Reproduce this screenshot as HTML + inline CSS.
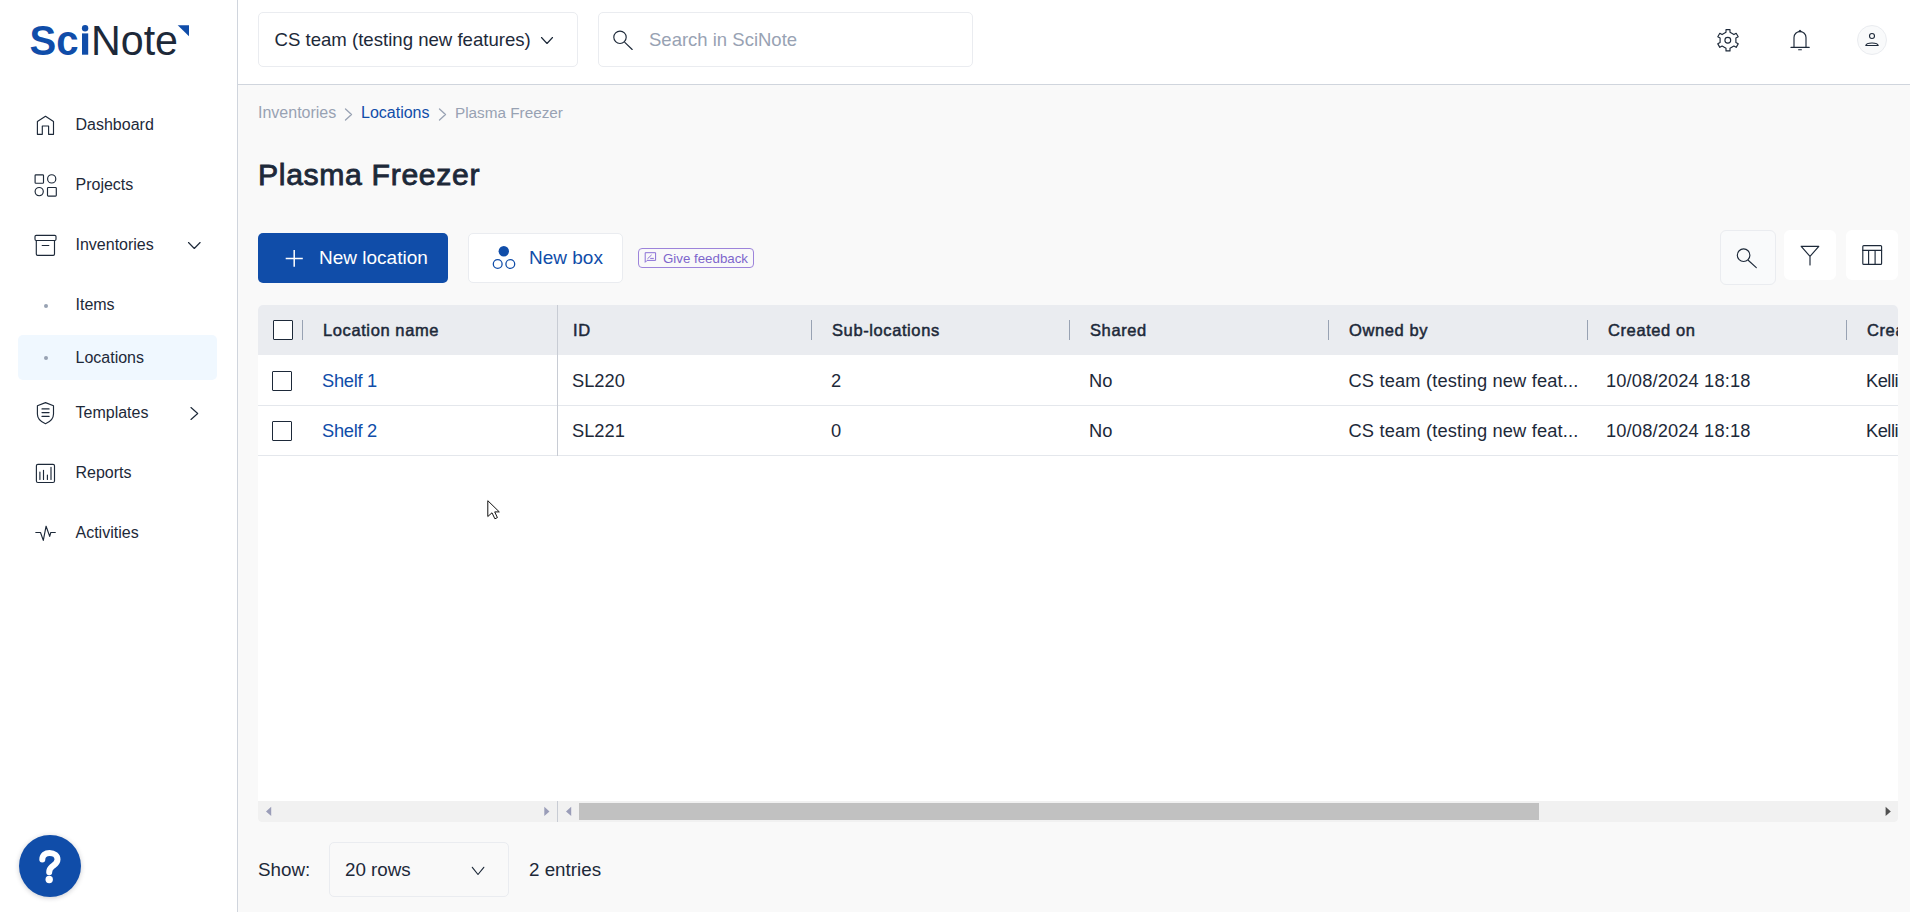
<!DOCTYPE html>
<html><head><meta charset="utf-8">
<style>
*{box-sizing:border-box;margin:0;padding:0}
html,body{width:1910px;height:912px;overflow:hidden;background:#F9F9F9;font-family:"Liberation Sans",sans-serif;color:#1D2939}
.a{position:absolute}
.t{position:absolute;white-space:nowrap;line-height:1}
svg{position:absolute;overflow:visible}
#side{position:absolute;left:0;top:0;width:238px;height:912px;background:#fff;border-right:1px solid #D0D5DD}
#head{position:absolute;left:238px;top:0;width:1672px;height:85px;background:#fff;border-bottom:1px solid #D0D5DD}
.nav{font-size:16px;color:#1D2939}
.bc{font-size:16px;color:#98A2B3}
.th{font-size:16.5px;font-weight:400;color:#1D2939;-webkit-text-stroke:0.5px #1D2939;letter-spacing:0.6px}
.td{font-size:18.3px;color:#1D2939}
.lnk{color:#104DA9}
.sep{position:absolute;top:320px;width:1px;height:20px;background:#98A2B3}
.cb{position:absolute;width:20px;height:20px;border:1.5px solid #1D2939;border-radius:1px;background:#fff}
.ft{font-size:18.8px}
</style></head><body>
<div id="side"></div>
<div id="head"></div>

<!-- logo -->
<svg style="left:0;top:0" width="238" height="84">
  <text x="29.5" y="54.8" font-family="Liberation Sans" font-weight="700" font-size="42.5" fill="#104DA9" textLength="49" lengthAdjust="spacingAndGlyphs">Sc</text>
  <rect x="82" y="33.4" width="6.2" height="21.3" fill="#104DA9"/>
  <circle cx="85.1" cy="28.2" r="3.2" fill="#104DA9"/>
  <text x="91" y="54.8" font-family="Liberation Sans" font-weight="400" font-size="42.7" fill="#1D2939" textLength="87" lengthAdjust="spacingAndGlyphs">Note</text>
  <path d="M177.7 25.2 H189 V36.2 Z" fill="#104DA9"/>
</svg>

<!-- sidebar icons -->
<svg style="left:0;top:0" width="238" height="600" fill="none" stroke="#1D2939" stroke-width="1.15" stroke-linejoin="round" stroke-linecap="round">
  <path d="M37.4,134.3 V121.5 L45.5,116.3 L53.5,121.5 V134.3 H48.6 V126 H42.3 V134.3 Z"/>
  <rect x="35.1" y="174.8" width="8.4" height="8.4" rx="0.8"/>
  <circle cx="51.7" cy="178.9" r="4.1"/>
  <circle cx="39.2" cy="191.6" r="4.1"/>
  <rect x="47.5" y="187.5" width="8.8" height="8.6" rx="0.8"/>
  <rect x="35" y="235.4" width="21" height="5.1" rx="1.2"/>
  <path d="M36.3,240.5 V254 Q36.3,255.3 37.6,255.3 H53.2 Q54.5,255.3 54.5,254 V240.5"/>
  <path d="M42.2,245.5 H48.8"/>
  <path d="M45.5,402.6 L53.5,405.7 V414 Q53.5,420.5 45.5,423.7 Q37.4,420.5 37.4,414 V405.7 Z"/>
  <path d="M42,408.9 H49.1 M42,412.6 H49.1 M42,416.4 H49.1"/>
  <rect x="36.4" y="464.3" width="18.1" height="18.2" rx="1.5"/>
  <path d="M39.9,472.1 V479.5 M43.5,470.2 V479.5 M47.4,475.1 V479.5 M51,467.2 V479.5"/>
  <path d="M35.8,532.5 H40.5 L43.3,540.4 L46.1,526.2 L49.7,536.4 L50.8,532.5 H55.3"/>
  <path d="M188.5,242.5 L194.3,248.5 L200.1,242.5"/>
  <path d="M191,407.5 L197.7,413.5 L191,419.5"/>
</svg>
<div class="a" style="left:18px;top:335px;width:199px;height:45px;background:#F0F8FF;border-radius:5px"></div>
<div class="a" style="left:43.6px;top:303.6px;width:4px;height:4px;border-radius:2px;background:#98A2B3"></div>
<div class="a" style="left:43.6px;top:356.2px;width:4px;height:4px;border-radius:2px;background:#98A2B3"></div>

<!-- sidebar nav -->
<div class="t nav" style="left:75.5px;top:117px">Dashboard</div>
<div class="t nav" style="left:75.5px;top:177px">Projects</div>
<div class="t nav" style="left:75.5px;top:237px">Inventories</div>
<div class="t nav" style="left:75.5px;top:297px">Items</div>
<div class="t nav" style="left:75.5px;top:350px">Locations</div>
<div class="t nav" style="left:75.5px;top:405px">Templates</div>
<div class="t nav" style="left:75.5px;top:465px">Reports</div>
<div class="t nav" style="left:75.5px;top:525px">Activities</div>

<!-- help button -->
<div class="a" style="left:18.5px;top:835px;width:62px;height:62px;border-radius:50%;background:#104DA9;box-shadow:0 1px 5px rgba(16,24,40,0.22)"></div>
<svg style="left:0;top:0" width="10" height="10" fill="none" stroke="#fff" stroke-width="6" stroke-linecap="round">
  <path d="M42.3,859.6 C42.3,855.2 45.4,853 49.6,853 C54.3,853 57.5,855.8 57.5,859.4 C57.5,863.2 54.2,864.8 51.9,866.8 C50,868.4 49.2,869.6 49.2,872.2"/>
  <circle cx="49.2" cy="879.5" r="3.7" fill="#fff" stroke="none"/>
</svg>

<!-- header -->
<div class="a" style="left:258px;top:12px;width:320px;height:55px;border:1px solid #EAECF0;border-radius:5px;background:#fff"></div>
<div class="t" style="left:274.5px;top:31px;font-size:18.6px">CS team (testing new features)</div>
<svg style="left:0;top:0" width="10" height="10" fill="none" stroke="#1D2939" stroke-width="1.15" stroke-linecap="round" stroke-linejoin="round">
  <path d="M541.5,37.5 L547,43.5 L552.5,37.5"/>
</svg>
<div class="a" style="left:598px;top:12px;width:375px;height:55px;border:1px solid #EAECF0;border-radius:5px;background:#fff"></div>
<svg style="left:0;top:0" width="10" height="10" fill="none" stroke="#1D2939" stroke-width="1.15" stroke-linecap="round">
  <circle cx="620" cy="37.3" r="6.2"/>
  <path d="M624.8,42.3 L632.2,49.5"/>
</svg>
<div class="t" style="left:649px;top:31.2px;font-size:18.5px;color:#98A2B3">Search in SciNote</div>

<svg style="left:0;top:0" width="10" height="10" fill="none" stroke="#1D2939" stroke-width="1.15" stroke-linejoin="round" stroke-linecap="round">
  <path d="M1726.00,32.35 L1726.00,29.69 L1730.00,29.69 L1730.00,32.35 L1733.89,34.59 L1736.19,33.26 L1738.19,36.73 L1735.89,38.06 L1735.89,42.54 L1738.19,43.87 L1736.19,47.34 L1733.89,46.01 L1730.00,48.25 L1730.00,50.91 L1726.00,50.91 L1726.00,48.25 L1722.11,46.01 L1719.81,47.34 L1717.81,43.87 L1720.11,42.54 L1720.11,38.06 L1717.81,36.73 L1719.81,33.26 L1722.11,34.59 Z"/>
  <circle cx="1727.8" cy="40.3" r="2.9"/>
  <path d="M1794,47.4 V37.5 A6,6 0 0 1 1806,37.5 V47.4 M1791,47.4 H1809.2 M1798.6,49.7 H1801.4"/>
  <path d="M1798.8,31.6 L1800,30.4 L1801.2,31.6 Z" fill="#1D2939"/>
</svg>
<div class="a" style="left:1857px;top:25px;width:30px;height:30px;border-radius:50%;border:1px solid #EAECF0;background:#F9FAFB"></div>
<svg style="left:0;top:0" width="10" height="10" fill="none" stroke="#1D2939" stroke-width="1.1" stroke-linejoin="round">
  <circle cx="1872" cy="36" r="2.5"/>
  <path d="M1865.8,45.5 C1866.3,42.2 1877.7,42.2 1878.2,45.5 Z"/>
</svg>

<!-- breadcrumb + title -->
<div class="t bc" style="left:258px;top:104.5px">Inventories</div>
<div class="t bc lnk" style="left:361px;top:104.5px;color:#104DA9">Locations</div>
<div class="t bc" style="left:455px;top:104.7px;font-size:15.3px">Plasma Freezer</div>
<svg style="left:0;top:0" width="10" height="10" fill="none" stroke="#98A2B3" stroke-width="1.3" stroke-linecap="round" stroke-linejoin="round">
  <path d="M345.5,109 L351.5,114.5 L345.5,120 M439.5,109 L445.5,114.5 L439.5,120"/>
</svg>
<div class="t" style="left:258px;top:160.3px;font-size:30.2px;font-weight:400;-webkit-text-stroke:0.85px #1D2939;letter-spacing:0.65px">Plasma Freezer</div>

<!-- buttons -->
<div class="a" style="left:258px;top:233px;width:190px;height:50px;background:#104DA9;border-radius:5px"></div>
<svg style="left:0;top:0" width="10" height="10" fill="none" stroke="#fff" stroke-width="1.5">
  <path d="M285.7,258.4 H302.8 M294.2,250 V266.8"/>
</svg>
<div class="t" style="left:319px;top:248px;font-size:19px;color:#fff">New location</div>

<div class="a" style="left:468px;top:233px;width:155px;height:50px;background:#fff;border:1px solid #EAECF0;border-radius:5px"></div>
<svg style="left:0;top:0" width="10" height="10" fill="none" stroke="#104DA9" stroke-width="1.3">
  <circle cx="503.8" cy="251.2" r="5.2" fill="#104DA9" stroke="none"/>
  <circle cx="497.7" cy="264" r="4.4"/>
  <circle cx="510.3" cy="264" r="4.4"/>
</svg>
<div class="t" style="left:529px;top:247.5px;font-size:19px;color:#104DA9">New box</div>

<div class="a" style="left:638px;top:248px;width:116px;height:20px;border:1px solid #9D84DB;border-radius:4px"></div>
<svg style="left:0;top:0" width="10" height="10" fill="none" stroke="#8A70D6" stroke-width="1" stroke-linejoin="round">
  <path d="M645.2,262.3 V252.7 H655.6 V260.4 H647.1 Z"/>
  <path d="M647.4,258.9 L651.6,254.9 M650.2,258.4 H653.8"/>
</svg>
<div class="t" style="left:663px;top:251.5px;font-size:13.3px;color:#7E66CC">Give feedback</div>

<div class="a" style="left:1720px;top:230px;width:56px;height:55px;background:#F9FAFB;border:1px solid #EAECF0;border-radius:6px"></div>
<div class="a" style="left:1784px;top:230px;width:52px;height:50px;background:#fff;border-radius:6px"></div>
<div class="a" style="left:1846px;top:230px;width:52px;height:50px;background:#fff;border-radius:6px"></div>
<svg style="left:0;top:0" width="10" height="10" fill="none" stroke="#1D2939" stroke-width="1.15" stroke-linecap="round" stroke-linejoin="round">
  <circle cx="1743.6" cy="255.2" r="6.3"/>
  <path d="M1748.2,260.3 L1756.3,267.6"/>
  <path d="M1801.2,246.3 H1818.8 L1810,256.4 Z M1810,256.4 V264.9"/>
  <rect x="1862.8" y="245.6" width="18.8" height="18.8" rx="1"/>
  <path d="M1862.8,250.4 H1881.6 M1868.6,250.4 V264.4 M1875.1,250.4 V264.4"/>
</svg>

<!-- table -->
<div class="a" style="left:258px;top:305px;width:1640px;height:517px;background:#fff;border-radius:5px 5px 4px 4px;overflow:hidden">
  <div class="a" style="left:0;top:0;width:1640px;height:50px;background:#EAECF0"></div>
  <div class="a" style="left:0;top:100px;width:1640px;height:1px;background:#E4E7EC"></div>
  <div class="a" style="left:0;top:150px;width:1640px;height:1px;background:#E4E7EC"></div>
  <div class="a" style="left:299px;top:0;width:1px;height:151px;background:#C8CCD4"></div>
  <div class="a" style="left:0;top:496px;width:1640px;height:21px;background:#F1F1F1"></div>
  <div class="a" style="left:299px;top:496px;width:1px;height:21px;background:#C8CCD4"></div>
  <div class="a" style="left:321px;top:498px;width:960px;height:17px;background:#C1C1C1"></div>
</div>
<svg style="left:0;top:0" width="10" height="10">
  <path d="M266,811.4 L271.2,806.8 V816 Z M549.5,811.4 L544.3,806.8 V816 Z M566,811.4 L571.2,806.8 V816 Z" fill="#9A9DB8"/>
  <path d="M1890.8,811.4 L1885.6,806.8 V816 Z" fill="#505050"/>
</svg>
<div class="sep" style="left:302px"></div>
<div class="sep" style="left:811px"></div>
<div class="sep" style="left:1069px"></div>
<div class="sep" style="left:1328px"></div>
<div class="sep" style="left:1587px"></div>
<div class="sep" style="left:1846px"></div>
<div class="cb" style="left:273px;top:320px"></div>
<div class="cb" style="left:272px;top:371px"></div>
<div class="cb" style="left:272px;top:421px"></div>

<div class="t th" style="left:323px;top:322px">Location name</div>
<div class="t th" style="left:573px;top:322px">ID</div>
<div class="t th" style="left:832px;top:322px">Sub-locations</div>
<div class="t th" style="left:1090px;top:322px">Shared</div>
<div class="t th" style="left:1349px;top:322px">Owned by</div>
<div class="t th" style="left:1608px;top:322px">Created on</div>
<div class="a" style="left:1866px;top:305px;width:32px;height:150px;overflow:hidden">
  <div class="t th" style="left:1px;top:17px">Created by</div>
  <div class="t td" style="left:0px;top:67.4px;letter-spacing:-0.5px">Kellie</div>
  <div class="t td" style="left:0px;top:117.4px;letter-spacing:-0.5px">Kellie</div>
</div>

<div class="t td lnk" style="left:322px;top:372.4px;letter-spacing:-0.3px">Shelf 1</div>
<div class="t td" style="left:572px;top:372.4px">SL220</div>
<div class="t td" style="left:831px;top:372.4px">2</div>
<div class="t td" style="left:1089px;top:372.4px">No</div>
<div class="t td" style="left:1348.5px;top:372.4px;letter-spacing:0.16px">CS team (testing new feat...</div>
<div class="t td" style="left:1606px;top:372.4px;letter-spacing:0.14px">10/08/2024 18:18</div>

<div class="t td lnk" style="left:322px;top:422.4px;letter-spacing:-0.3px">Shelf 2</div>
<div class="t td" style="left:572px;top:422.4px">SL221</div>
<div class="t td" style="left:831px;top:422.4px">0</div>
<div class="t td" style="left:1089px;top:422.4px">No</div>
<div class="t td" style="left:1348.5px;top:422.4px;letter-spacing:0.16px">CS team (testing new feat...</div>
<div class="t td" style="left:1606px;top:422.4px;letter-spacing:0.14px">10/08/2024 18:18</div>

<!-- footer -->
<div class="t ft" style="left:258px;top:861px">Show:</div>
<div class="a" style="left:329px;top:842px;width:180px;height:55px;border:1px solid #EAECF0;border-radius:5px"></div>
<div class="t ft" style="left:345px;top:861px">20 rows</div>
<svg style="left:0;top:0" width="10" height="10" fill="none" stroke="#1D2939" stroke-width="1.15" stroke-linecap="round" stroke-linejoin="round">
  <path d="M472.3,867.3 L478,874.5 L483.8,867.3"/>
</svg>
<div class="t ft" style="left:529px;top:861px">2 entries</div>

<!-- cursor -->
<svg style="left:0;top:0" width="10" height="10">
  <path d="M487.8,500.7 V516.5 L492,512.8 L494.9,518.8 L497.4,517.6 L494.7,511.9 H499.3 Z" fill="#fff" stroke="#111" stroke-width="1" stroke-linejoin="round"/>
</svg>
</body></html>
